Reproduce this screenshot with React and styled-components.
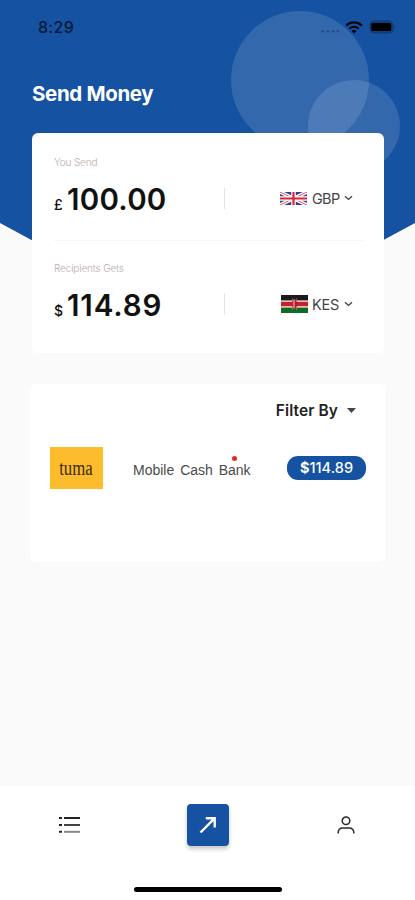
import styled, { createGlobalStyle } from 'styled-components';

const GlobalStyle = createGlobalStyle`
  * {
    box-sizing: border-box;
  }
  body {
    margin: 0;
    background-color: #fafafa;
  }
`;

const Screen = styled.div`
  position: relative;
  width: 415px;
  height: 900px;
  display: flex;
  flex-direction: column;
  background-color: #fafafa;
  font-family: Inter, 'Liberation Sans', sans-serif;
  color: #111;
  overflow: hidden;
  white-space: nowrap;
`;

const Backdrop = styled.div`
  position: absolute;
  top: 0;
  left: 0;
  width: 415px;
  height: 335px;
  background-color: #1552a1;
  clip-path: polygon(0 0, 100% 0, 100% 223px, 50% 100%, 0 223px);
`;

const Bubble = styled.div`
  position: absolute;
  left: ${(props) => props.$left}px;
  top: ${(props) => props.$top}px;
  width: ${(props) => props.$size}px;
  height: ${(props) => props.$size}px;
  border-radius: 50%;
  background-color: rgba(255, 255, 255, 0.13);
`;

const StatusBar = styled.header`
  position: relative;
  display: flex;
  align-items: center;
  justify-content: space-between;
  height: 54px;
  padding: 0 19px 0 38px;
`;

const Clock = styled.span`
  font-size: 16px;
  font-weight: 500;
  letter-spacing: 0.3px;
  color: #071a38;
`;

const StatusIcons = styled.div`
  display: flex;
  align-items: center;
`;

const Title = styled.h1`
  position: relative;
  margin: 26px 0 0 32px;
  height: 28px;
  line-height: 28px;
  font-size: 20.5px;
  font-weight: 700;
  letter-spacing: -0.35px;
  color: #fff;
`;

const Card = styled.section`
  position: relative;
  width: ${(props) => props.$width}px;
  height: ${(props) => props.$height}px;
  margin: ${(props) => props.$margin};
  background-color: #fff;
  border-radius: 6px;
`;

const MoneyRow = styled.div`
  height: 107px;
  padding: ${(props) => props.$top}px 0 0 22px;
`;

const Label = styled.div`
  height: 16px;
  line-height: 16px;
  font-size: 10px;
  font-weight: 300;
  letter-spacing: -0.15px;
  color: #b9abab;
`;

const MoneyLine = styled.div`
  display: grid;
  grid-template-columns: 170px 1px 53px 1fr;
  grid-template-rows: 36px;
  align-items: center;
  height: 36px;
  margin-top: 10px;
`;

const Amount = styled.div`
  display: flex;
  align-items: baseline;
  gap: 4px;
  padding-top: 7px;
  line-height: 36px;
  font-size: 29.5px;
  font-weight: 600;
  letter-spacing: ${(props) => props.$spacing}px;
`;

const Symbol = styled.span`
  width: 9px;
  font-size: 14px;
  font-weight: 500;
  letter-spacing: 0;
`;

const Separator = styled.span`
  width: 1px;
  height: 21px;
  background-color: #e3e3e3;
`;

const Currency = styled.div`
  grid-column: 4;
  display: flex;
  align-items: center;
  padding-left: ${(props) => props.$indent}px;
  font-size: 14.5px;
  color: #444;

  svg {
    flex: none;
  }
`;

const Code = styled.span`
  width: 32px;
  margin-left: ${(props) => props.$gap}px;
  letter-spacing: ${(props) => props.$spacing}px;
`;

const Rule = styled.hr`
  height: 1px;
  margin: 0 20px 0 22px;
  border: 0;
  background-color: #f6f6f6;
`;

const Filter = styled.button`
  display: flex;
  align-items: center;
  justify-content: flex-end;
  gap: 9px;
  width: 100%;
  height: 52px;
  padding: 0 29px 0 0;
  border: 0;
  background: none;
  font: 600 15.5px Inter, sans-serif;
  letter-spacing: 0.1px;
  color: #222;
`;

const Provider = styled.div`
  display: flex;
  align-items: center;
  height: 42px;
  margin: 11px 19px 0 20px;
`;

const Logo = styled.div`
  width: 53px;
  height: 42px;
  display: flex;
  align-items: center;
  justify-content: center;
  background-color: #fdbc2c;
`;

const LogoText = styled.span`
  font-family: 'Liberation Serif', serif;
  font-size: 20px;
  line-height: 20px;
  color: #3b2c12;
  transform: translateX(-1px) scaleX(0.84);
`;

const Methods = styled.div`
  position: relative;
  margin: 4px 0 0 30px;
  font-family: 'Liberation Sans', sans-serif;
  font-size: 14px;
  word-spacing: 2px;
  color: #4a4a4a;
`;

const Dot = styled.span`
  position: absolute;
  left: 99px;
  top: -6px;
  width: 5px;
  height: 5px;
  border-radius: 50%;
  background-color: #f0251c;
`;

const Pill = styled.div`
  width: 79px;
  height: 24px;
  margin-left: auto;
  border-radius: 11px;
  background-color: #1552a1;
  color: #fff;
  text-align: center;
  font-size: 14.5px;
  line-height: 24px;
  font-weight: 500;
  letter-spacing: 0.05px;
`;

const TabBar = styled.nav`
  display: grid;
  grid-template-columns: repeat(3, 138.5px);
  justify-items: center;
  align-items: center;
  height: 114px;
  margin-top: auto;
  padding-bottom: 36px;
  background-color: #fff;
`;

const SendTab = styled.div`
  width: 42px;
  height: 42px;
  display: flex;
  align-items: center;
  justify-content: center;
  border-radius: 4px;
  background-color: #1552a1;
  box-shadow: 0 3px 4px rgba(0, 0, 0, 0.22);
`;

const HomeIndicator = styled.div`
  position: absolute;
  left: 134px;
  bottom: 8px;
  width: 148px;
  height: 5px;
  border-radius: 3px;
  background-color: #000;
`;

function Wifi() {
  return (
    <svg width="18" height="13" viewBox="0 0 18 13" fill="none" stroke="#02070f">
      <path d="M1.2 4.6a11.2 11.2 0 0 1 15.6 0" strokeWidth="2.3" />
      <path d="M4.3 7.7a6.8 6.8 0 0 1 9.4 0" strokeWidth="2.1" />
      <path d="M9 12.4 6.5 9.9a3.6 3.6 0 0 1 5 0z" fill="#02070f" stroke="none" />
    </svg>
  );
}

function Battery() {
  return (
    <svg width="27" height="14" viewBox="0 0 27 14">
      <rect x="1" y="1" width="23" height="12" rx="3.8" fill="#114080" stroke="#0f3974" />
      <rect x="2.3" y="3" width="20" height="8" rx="1.6" fill="#000" />
      <path d="M25.2 5v4.2c1.4-.7 1.4-3.5 0-4.2z" fill="#0f3974" />
    </svg>
  );
}

function UkFlag() {
  return (
    <svg width="27" height="13" viewBox="0 0 27 13">
      <rect width="27" height="13" fill="#35418f" />
      <path d="M0 0l27 13M27 0L0 13" stroke="#fff" strokeWidth="3.6" />
      <path d="M0 0l27 13M27 0L0 13" stroke="#df5563" strokeWidth="1" />
      <path d="M13.5 0v13M0 6.5h27" stroke="#fff" strokeWidth="4.6" />
      <path d="M13.5 0v13M0 6.5h27" stroke="#d92637" strokeWidth="2.2" />
    </svg>
  );
}

function KenyaFlag() {
  return (
    <svg width="27" height="18" viewBox="0 0 27 18">
      <rect width="27" height="18" fill="#f3dede" />
      <rect width="27" height="5.4" fill="#1b1b1b" />
      <rect y="6.8" width="27" height="4.4" fill="#c8202d" />
      <rect y="12.6" width="27" height="5.4" fill="#106b24" />
      <path d="M11.3 3.5l4.4 11M15.7 3.5l-4.4 11" stroke="#dcb9b9" strokeWidth=".6" />
      <ellipse cx="13.5" cy="9" rx="2.4" ry="5" fill="#bd2430" />
      <path d="M13 4.8v8.4" stroke="#f4d9d9" strokeWidth=".9" />
      <path d="M15 7v4" stroke="#6b1a20" strokeWidth=".8" />
    </svg>
  );
}

function Chevron() {
  return (
    <svg width="9" height="6" viewBox="0 0 9 6" fill="none" stroke="#444" strokeWidth="1.4">
      <path d="M1 1.2l3.5 3.2L8 1.2" />
    </svg>
  );
}

function App() {
  return (
    <>
      <GlobalStyle />
      <Screen>
        <Backdrop>
          <Bubble $left={231} $top={11} $size={138} />
          <Bubble $left={308} $top={80} $size={92} />
        </Backdrop>

        <StatusBar>
          <Clock>8:29</Clock>
          <StatusIcons>
            <svg width="24" height="13" viewBox="0 0 24 13" fill="#244e8b">
              <circle cx="2" cy="10.2" r="1.3" />
              <circle cx="7" cy="10.2" r="1.3" />
              <circle cx="12" cy="10.2" r="1.3" />
              <circle cx="17" cy="10.2" r="1.3" />
            </svg>
            <Wifi />
            <svg width="6" height="1" />
            <Battery />
          </StatusIcons>
        </StatusBar>

        <Title>Send Money</Title>

        <Card $width={352} $height={220} $margin="25px 0 0 32px">
          <MoneyRow $top={21}>
            <Label>You Send</Label>
            <MoneyLine>
              <Amount $spacing={0.25}>
                <Symbol>£</Symbol>100.00
              </Amount>
              <Separator />
              <Currency $indent={1.5}>
                <UkFlag />
                <Code $gap={5.5} $spacing={-0.7}>GBP</Code>
                <Chevron />
              </Currency>
            </MoneyLine>
          </MoneyRow>
          <Rule />
          <MoneyRow $top={19}>
            <Label>Recipients Gets</Label>
            <MoneyLine>
              <Amount $spacing={0.9}>
                <Symbol>$</Symbol>114.89
              </Amount>
              <Separator />
              <Currency $indent={3}>
                <KenyaFlag />
                <Code $gap={4} $spacing={-0.2}>KES</Code>
                <Chevron />
              </Currency>
            </MoneyLine>
          </MoneyRow>
        </Card>

        <Card $width={355} $height={178} $margin="31px 0 0 30px">
          <Filter>
            Filter By
            <svg width="9" height="5" viewBox="0 0 9 5">
              <path d="M0 0h9L4.5 5z" fill="#444" />
            </svg>
          </Filter>
          <Provider>
            <Logo>
              <LogoText>tuma</LogoText>
            </Logo>
            <Methods>
              Mobile Cash Bank
              <Dot />
            </Methods>
            <Pill>
              <b>$</b>114.89
            </Pill>
          </Provider>
        </Card>

        <TabBar>
          <svg width="22" height="18" viewBox="0 0 22 18" stroke="#222" strokeWidth="2">
            <path d="M1 2h3M1 9h3M1 15.8h3" />
            <path d="M6 2h16" />
            <path d="M6 9h16" stroke="#444" />
            <path d="M6 15.8h16" stroke="#888" />
          </svg>
          <SendTab>
            <svg width="18" height="18" viewBox="0 0 18 18" fill="none" stroke="#fff" strokeWidth="2.4">
              <path d="M1.5 16.5L15.5 2.3M6.8 2.3h8.9v9.2" />
            </svg>
          </SendTab>
          <svg width="18" height="18" viewBox="0 0 18 18" fill="none" stroke="#2a2a2a" strokeWidth="1.5">
            <circle cx="9" cy="4.8" r="3.8" />
            <path d="M1.2 17.5v-1.2a4.3 4.3 0 0 1 4.3-4.3h7a4.3 4.3 0 0 1 4.3 4.3v1.2" />
          </svg>
          <HomeIndicator />
        </TabBar>
      </Screen>
    </>
  );
}

export default App;
